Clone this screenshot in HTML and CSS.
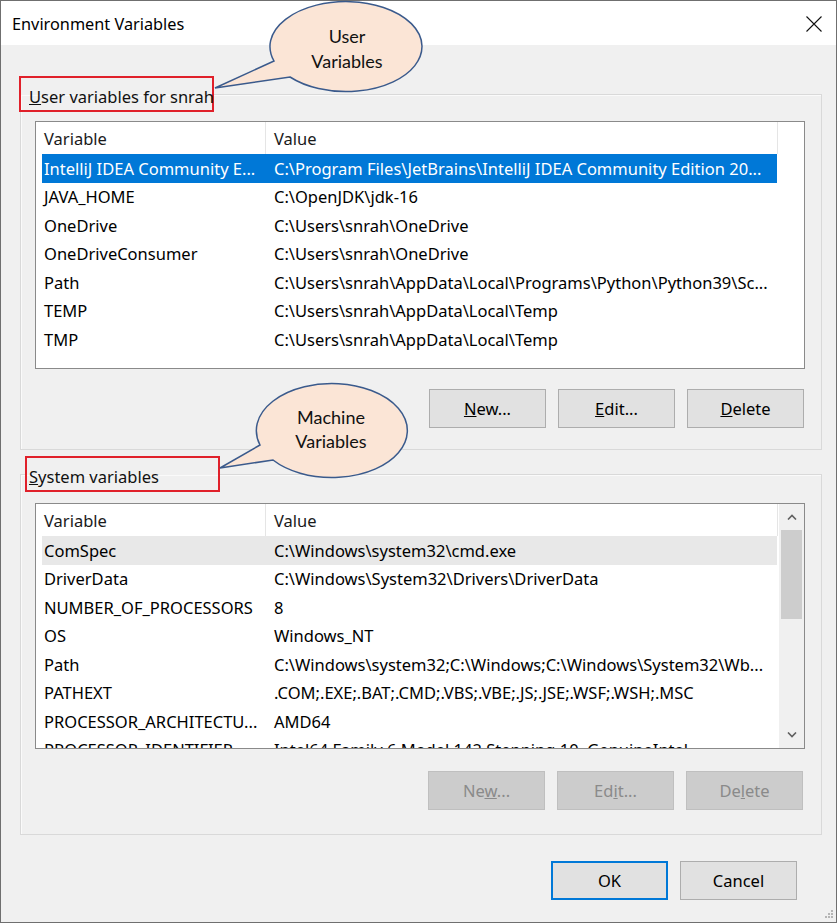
FILE: index.html
```html
<!DOCTYPE html>
<html lang="en">
<head>
<meta charset="utf-8">
<title>Environment Variables</title>
<link rel="stylesheet" href="styles.css">
</head>
<body>
<div class="window">
  <header class="titlebar">
    <span class="title">Environment Variables</span>
    <svg class="close" width="16" height="16" viewBox="0 0 16 16"><path d="M0.5 0.5 L15.5 15.5 M15.5 0.5 L0.5 15.5"/></svg>
  </header>
  <main class="content">
    <fieldset class="group">
      <legend class="label label-user"><u>U</u>ser variables for snrah</legend>
      <div class="group-inner inner-user">
        <div class="list list-user">
          <div class="list-main">
            <div class="list-header"><div class="hcell hcell-var">Variable</div><div class="hcell hcell-val">Value</div></div>
            <div class="row selected"><div class="cell cell-var">IntelliJ IDEA Community E...</div><div class="cell cell-val">C:\Program Files\JetBrains\IntelliJ IDEA Community Edition 20...</div></div>
            <div class="row"><div class="cell cell-var">JAVA_HOME</div><div class="cell cell-val">C:\OpenJDK\jdk-16</div></div>
            <div class="row"><div class="cell cell-var">OneDrive</div><div class="cell cell-val">C:\Users\snrah\OneDrive</div></div>
            <div class="row"><div class="cell cell-var">OneDriveConsumer</div><div class="cell cell-val">C:\Users\snrah\OneDrive</div></div>
            <div class="row"><div class="cell cell-var">Path</div><div class="cell cell-val">C:\Users\snrah\AppData\Local\Programs\Python\Python39\Sc...</div></div>
            <div class="row"><div class="cell cell-var">TEMP</div><div class="cell cell-val">C:\Users\snrah\AppData\Local\Temp</div></div>
            <div class="row"><div class="cell cell-var">TMP</div><div class="cell cell-val">C:\Users\snrah\AppData\Local\Temp</div></div>
          </div>
        </div>
        <div class="buttons buttons-user">
          <button class="btn"><u>N</u>ew...</button>
          <button class="btn"><u>E</u>dit...</button>
          <button class="btn"><u>D</u>elete</button>
        </div>
      </div>
    </fieldset>

    <fieldset class="group group-sys">
      <legend class="label label-sys"><u>S</u>ystem variables</legend>
      <div class="group-inner inner-sys">
        <div class="list list-sys">
          <div class="list-main">
            <div class="list-header"><div class="hcell hcell-var">Variable</div><div class="hcell hcell-val">Value</div></div>
            <div class="row hover"><div class="cell cell-var">ComSpec</div><div class="cell cell-val">C:\Windows\system32\cmd.exe</div></div>
            <div class="row"><div class="cell cell-var">DriverData</div><div class="cell cell-val">C:\Windows\System32\Drivers\DriverData</div></div>
            <div class="row"><div class="cell cell-var">NUMBER_OF_PROCESSORS</div><div class="cell cell-val">8</div></div>
            <div class="row"><div class="cell cell-var">OS</div><div class="cell cell-val">Windows_NT</div></div>
            <div class="row"><div class="cell cell-var">Path</div><div class="cell cell-val">C:\Windows\system32;C:\Windows;C:\Windows\System32\Wb...</div></div>
            <div class="row"><div class="cell cell-var">PATHEXT</div><div class="cell cell-val">.COM;.EXE;.BAT;.CMD;.VBS;.VBE;.JS;.JSE;.WSF;.WSH;.MSC</div></div>
            <div class="row"><div class="cell cell-var">PROCESSOR_ARCHITECTU...</div><div class="cell cell-val">AMD64</div></div>
            <div class="row"><div class="cell cell-var">PROCESSOR_IDENTIFIER</div><div class="cell cell-val">Intel64 Family 6 Model 142 Stepping 10, GenuineIntel</div></div>
          </div>
          <div class="scrollbar">
            <div class="sb-arrow"><svg width="10" height="6" viewBox="0 0 10 6"><path d="M1 5.5 L5 1.5 L9 5.5"/></svg></div>
            <div class="sb-track"><div class="sb-thumb"></div></div>
            <div class="sb-arrow"><svg width="10" height="6" viewBox="0 0 10 6"><path d="M1 0.5 L5 4.5 L9 0.5"/></svg></div>
          </div>
        </div>
        <div class="buttons buttons-sys">
          <button class="btn" disabled>Ne<u>w</u>...</button>
          <button class="btn" disabled>Ed<u>i</u>t...</button>
          <button class="btn" disabled>De<u>l</u>ete</button>
        </div>
      </div>
    </fieldset>

    <div class="footer">
      <button class="btn btn-default">OK</button>
      <button class="btn">Cancel</button>
    </div>
  </main>

  <svg class="callouts" width="837" height="923" viewBox="0 0 837 923">
    <path class="bubble" d="M274 61 L215 88 L290 77 A76 45 0 1 0 274 61 Z"/>
    <text class="bubble-text" x="347" y="43">User</text>
    <text class="bubble-text" x="347" y="68">Variables</text>
    <path class="bubble" d="M260 445 L220 468 L273 460 A75.5 47 0 1 0 260 445 Z"/>
    <text class="bubble-text" x="331" y="424">Machine</text>
    <text class="bubble-text" x="331" y="448">Variables</text>
  </svg>

  <svg class="grip" width="10" height="10" viewBox="0 0 10 10">
    <rect x="7" y="1" width="2" height="2"/>
    <rect x="4" y="4" width="2" height="2"/><rect x="7" y="4" width="2" height="2"/>
    <rect x="1" y="7" width="2" height="2"/><rect x="4" y="7" width="2" height="2"/><rect x="7" y="7" width="2" height="2"/>
  </svg>
</div>
</body>
</html>
```

FILE: styles.css
```css
* { box-sizing: border-box; }

html, body {
  margin: 0;
  padding: 0;
  background: #ffffff;
}

body {
  font-family: "Noto Sans", "Open Sans", sans-serif;
  font-size: 16.5px;
  color: #000;
}

.window {
  position: relative;
  width: 837px;
  height: 923px;
  border: 1px solid #6f6f6f;
  background: #f0f0f0;
  display: flex;
  flex-direction: column;
}

.titlebar {
  height: 44px;
  flex: none;
  background: #ffffff;
  display: flex;
  align-items: center;
  justify-content: space-between;
  padding: 2px 14px 0 11px;
}

.title {
  font-size: 16.3px;
  color: #000;
}

.close path {
  stroke: #111;
  stroke-width: 1.1;
  fill: none;
}

.content {
  padding: 0 14px 0 19px;
  display: flex;
  flex-direction: column;
}

.group {
  margin: 31px 0 0 0;
  padding: 0;
  min-width: 0;
  border: 1px solid #d9d9d9;
  box-shadow: inset 1px 1px 0 #fafafa;
}

.group-sys {
  margin-top: 6px;
}

.label {
  width: 195px;
  height: 36px;
  border: 2px solid #e0202a;
  padding: 9px 0 0 8px;
  line-height: 20px;
  margin-left: -2px;
  white-space: nowrap;
  color: #111;
}

.label-sys {
  margin-left: 4px;
  padding-left: 2px;
}

.group-inner {
  display: flex;
  flex-direction: column;
  padding: 9px 16px 21px 14px;
}

.inner-sys {
  padding: 11px 16px 24px 14px;
}

.list {
  height: 248px;
  border: 1px solid #8a8a8a;
  background: #ffffff;
  display: flex;
  overflow: hidden;
}

.list-sys {
  height: 246px;
}

.list-main {
  flex: 1;
  min-width: 0;
  overflow: hidden;
}

.list-header {
  display: flex;
  height: 32px;
  align-items: stretch;
  width: 742px;
}

.hcell {
  display: flex;
  align-items: center;
  padding-left: 8px;
  color: #1a1a1a;
  border-right: 1px solid #e5e5e5;
}

.hcell-var { width: 230px; }
.hcell-val { width: 512px; }

.row {
  display: flex;
  height: 28.5px;
  align-items: center;
  margin-left: 6px;
  width: 735px;
}

.row.selected {
  background: #0078d7;
  color: #ffffff;
}

.row.hover {
  background: #e8e8e8;
}

.cell {
  white-space: nowrap;
  overflow: hidden;
  text-overflow: clip;
}

.cell-var {
  width: 223px;
  flex: none;
  padding-left: 2px;
}

.cell-val {
  flex: 1;
  min-width: 0;
  padding-left: 9px;
}

.scrollbar {
  width: 25px;
  flex: none;
  background: #f0f0f0;
  display: flex;
  flex-direction: column;
}

.sb-arrow {
  height: 26px;
  display: flex;
  align-items: center;
  justify-content: center;
}

.sb-arrow path {
  stroke: #606060;
  stroke-width: 1.6;
  fill: none;
}

.sb-track {
  flex: 1;
  padding: 0 2px;
}

.sb-thumb {
  height: 89px;
  background: #cdcdcd;
}

.buttons {
  display: flex;
  justify-content: flex-end;
  gap: 12px;
  margin-top: 20px;
  padding-right: 1px;
}

.buttons-sys {
  margin-top: 22px;
  padding-right: 2px;
}

.btn {
  width: 117px;
  height: 39px;
  background: #e1e1e1;
  border: 1px solid #adadad;
  font-family: "Noto Sans", "Open Sans", sans-serif;
  font-size: 16.5px;
  color: #000;
  padding: 0;
  margin: 0;
}

.btn:disabled {
  background: #cccccc;
  border-color: #bfbfbf;
  color: #8a8a8a;
}

.btn-default {
  border: 2px solid #0078d7;
}

.footer {
  display: flex;
  justify-content: flex-end;
  gap: 12px;
  margin-top: 26px;
  padding-right: 25px;
}

.callouts {
  position: absolute;
  top: -1px;
  left: -1px;
  pointer-events: none;
}

.bubble {
  fill: #fbe5d6;
  stroke: #3a5a8c;
  stroke-width: 1.5;
}

.bubble-text {
  font-family: Lato, "Liberation Sans", sans-serif;
  font-size: 18px;
  fill: #111;
  text-anchor: middle;
}

.grip {
  position: absolute;
  right: 2px;
  bottom: 3px;
}

.grip rect {
  fill: #b5b5b5;
}
```
